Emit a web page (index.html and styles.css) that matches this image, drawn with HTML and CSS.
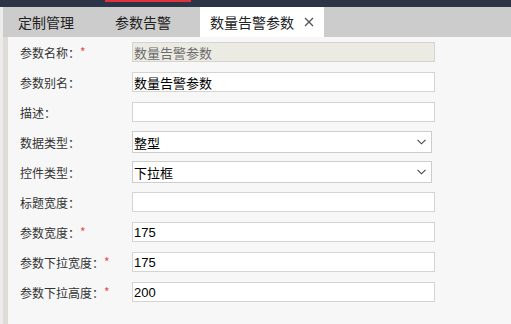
FILE: index.html
```html
<html>
    <head>
        <meta charset="utf-8">
        <link rel="stylesheet" href="styles.css">
    </head>
    <body>
        <div class="topbar">
            <div class="topbar-mark"></div>
        </div>
        <div class="page">
            <div class="tabs">
                <div class="tab tab-first">定制管理</div>
                <div class="tab tab-second">参数告警</div>
                <div class="tab tab-active">
                    <span>数量告警参数</span>
                    <svg class="tab-close" width="10" height="10" viewBox="0 0 10 10">
                        <path d="M1 1L9 9M9 1L1 9" stroke="#555" stroke-width="1.3" fill="none"/>
                    </svg>
                </div>
            </div>
            <div class="content">
                <div class="form">
                    <div class="row">
                        <label class="label">参数名称：<span class="req">*</span></label>
                        <input class="field field-disabled" type="text" value="数量告警参数" disabled>
                    </div>
                    <div class="row">
                        <label class="label">参数别名：</label>
                        <input class="field" type="text" value="数量告警参数">
                    </div>
                    <div class="row">
                        <label class="label">描述：</label>
                        <input class="field" type="text" value="">
                    </div>
                    <div class="row">
                        <label class="label">数据类型：</label>
                        <div class="select-wrap">
                            <select class="select">
                                <option>整型</option>
                            </select>
                            <svg class="select-arrow" width="9" height="6" viewBox="0 0 9 6">
                                <path d="M0.5 0.8L4.5 4.8L8.5 0.8" stroke="#444" stroke-width="1.1" fill="none"/>
                            </svg>
                        </div>
                    </div>
                    <div class="row">
                        <label class="label">控件类型：</label>
                        <div class="select-wrap">
                            <select class="select">
                                <option>下拉框</option>
                            </select>
                            <svg class="select-arrow" width="9" height="6" viewBox="0 0 9 6">
                                <path d="M0.5 0.8L4.5 4.8L8.5 0.8" stroke="#444" stroke-width="1.1" fill="none"/>
                            </svg>
                        </div>
                    </div>
                    <div class="row">
                        <label class="label">标题宽度：</label>
                        <input class="field" type="text" value="">
                    </div>
                    <div class="row">
                        <label class="label">参数宽度：<span class="req">*</span></label>
                        <input class="field" type="text" value="175">
                    </div>
                    <div class="row">
                        <label class="label">参数下拉宽度：<span class="req">*</span></label>
                        <input class="field" type="text" value="175">
                    </div>
                    <div class="row">
                        <label class="label">参数下拉高度：<span class="req">*</span></label>
                        <input class="field" type="text" value="200">
                    </div>
                </div>
            </div>
        </div>
    </body>
</html>
```

FILE: styles.css
```css
body {
    margin: 0;
    height: 324px;
    overflow: hidden;
    font-family: "Noto Sans CJK SC", "Liberation Sans", sans-serif;
    background-color: #f7f7f7;
}

.topbar {
    height: 7px;
    background-color: #2c3447;
}

.topbar-mark {
    margin-left: 105px;
    width: 86px;
    height: 2px;
    background-color: #e0323c;
}

.page {
    height: 317px;
    padding-left: 3px;
    background-color: #ececec;
    display: flex;
    flex-direction: column;
}

.tabs {
    display: flex;
    height: 30px;
    background-color: #cccccc;
}

.tab {
    height: 30px;
    line-height: 30px;
    font-size: 14px;
    color: #222;
    box-sizing: border-box;
}

.tab-first {
    width: 97px;
    padding-left: 15px;
}

.tab-second {
    width: 100px;
    padding-left: 15px;
}

.tab-active {
    display: flex;
    align-items: center;
    gap: 10px;
    padding: 0 10px;
    background-color: #ffffff;
}

.tab-close {
    display: block;
}

.content {
    flex: 1;
    border-left: 5px solid #dfdbd6;
    background-color: #f7f7f7;
}

.form {
    display: flex;
    flex-direction: column;
}

.row {
    display: flex;
    align-items: center;
    height: 30px;
}

.label {
    width: 112px;
    padding-left: 12px;
    font-size: 12px;
    color: #333;
    white-space: nowrap;
}

.req {
    color: #f04848;
    position: relative;
    top: -1px;
}

.field {
    width: 303px;
    height: 20px;
    box-sizing: border-box;
    margin: 0;
    padding: 0 1px;
    border: 1px solid #d6d4d0;
    background-color: #ffffff;
    font-family: "Liberation Sans", "Noto Sans CJK SC", sans-serif;
    font-size: 13px;
    color: #000;
    outline: none;
}

.field-disabled {
    background-color: #ebebe4;
    color: #6d6d6d;
}

.select-wrap {
    position: relative;
    width: 300px;
    height: 22px;
}

.select {
    appearance: none;
    -webkit-appearance: none;
    width: 300px;
    height: 22px;
    box-sizing: border-box;
    margin: 0;
    padding: 0 1px;
    border: 1px solid #cfcdca;
    border-radius: 0;
    background-color: #ffffff;
    font-family: "Noto Sans CJK SC", sans-serif;
    font-size: 13px;
    color: #000;
    outline: none;
}

.select-arrow {
    position: absolute;
    right: 6px;
    top: 8px;
}
```
